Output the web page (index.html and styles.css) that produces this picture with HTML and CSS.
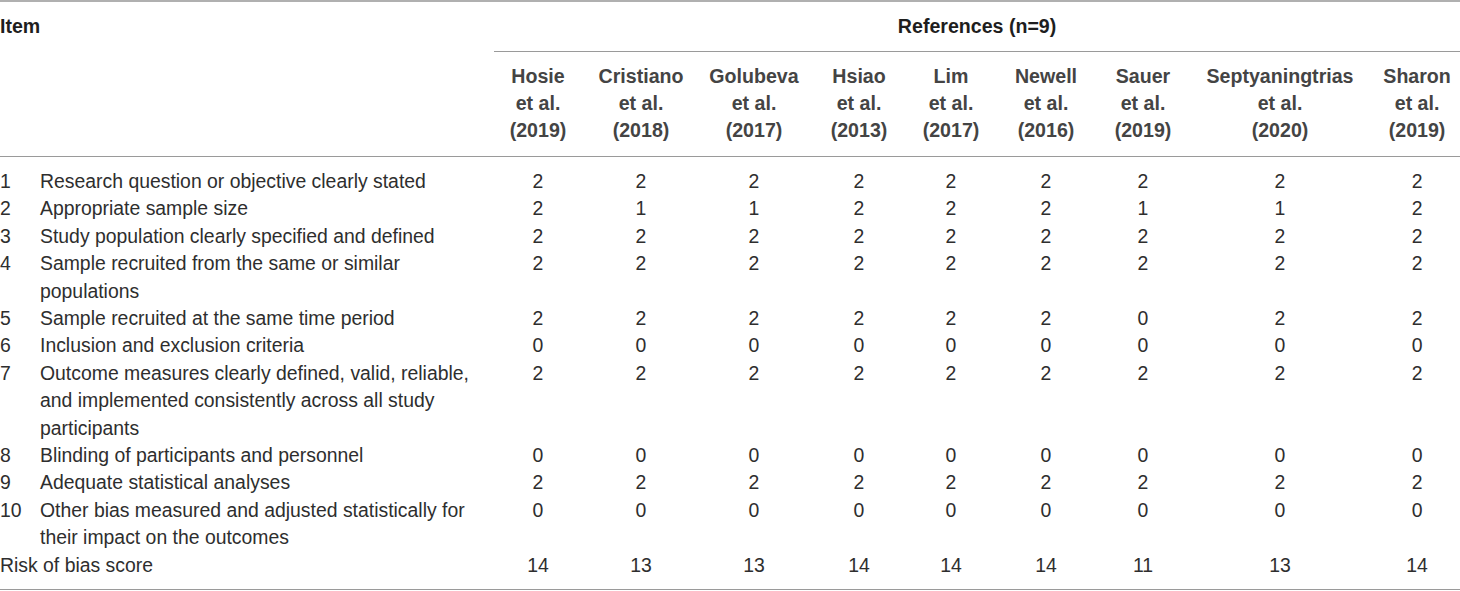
FILE: index.html
```html
<!DOCTYPE html>
<html lang="en">
<head>
    <meta charset="UTF-8">
    <meta name="viewport" content="width=device-width, initial-scale=1.0">
    <title>Risk of bias</title>
    <link rel="stylesheet" href="styles.css">
</head>
<body>
    <table class="bias-table">
        <colgroup>
            <col class="col-num">
            <col class="col-item">
            <col style="width: 88px">
            <col style="width: 118px">
            <col style="width: 108px">
            <col style="width: 102px">
            <col style="width: 82px">
            <col style="width: 108px">
            <col style="width: 86px">
            <col style="width: 188px">
            <col style="width: 86px">
        </colgroup>
        <thead>
            <tr class="head-top">
                <th colspan="2" class="item-head">Item</th>
                <th colspan="9" class="ref-head">References (n=9)</th>
            </tr>
            <tr class="head-authors">
                <th colspan="2"></th>
                <th>Hosie<br>et al.<br>(2019)</th>
                <th>Cristiano<br>et al.<br>(2018)</th>
                <th>Golubeva<br>et al.<br>(2017)</th>
                <th>Hsiao<br>et al.<br>(2013)</th>
                <th>Lim<br>et al.<br>(2017)</th>
                <th>Newell<br>et al.<br>(2016)</th>
                <th>Sauer<br>et al.<br>(2019)</th>
                <th>Septyaningtrias<br>et al.<br>(2020)</th>
                <th>Sharon<br>et al.<br>(2019)</th>
            </tr>
        </thead>
        <tbody>
            <tr>
                <td class="num">1</td>
                <td class="item">Research question or objective clearly stated</td>
                <td>2</td><td>2</td><td>2</td><td>2</td><td>2</td><td>2</td><td>2</td><td>2</td><td>2</td>
            </tr>
            <tr>
                <td class="num">2</td>
                <td class="item">Appropriate sample size</td>
                <td>2</td><td>1</td><td>1</td><td>2</td><td>2</td><td>2</td><td>1</td><td>1</td><td>2</td>
            </tr>
            <tr>
                <td class="num">3</td>
                <td class="item">Study population clearly specified and defined</td>
                <td>2</td><td>2</td><td>2</td><td>2</td><td>2</td><td>2</td><td>2</td><td>2</td><td>2</td>
            </tr>
            <tr>
                <td class="num">4</td>
                <td class="item">Sample recruited from the same or similar populations</td>
                <td>2</td><td>2</td><td>2</td><td>2</td><td>2</td><td>2</td><td>2</td><td>2</td><td>2</td>
            </tr>
            <tr>
                <td class="num">5</td>
                <td class="item">Sample recruited at the same time period</td>
                <td>2</td><td>2</td><td>2</td><td>2</td><td>2</td><td>2</td><td>0</td><td>2</td><td>2</td>
            </tr>
            <tr>
                <td class="num">6</td>
                <td class="item">Inclusion and exclusion criteria</td>
                <td>0</td><td>0</td><td>0</td><td>0</td><td>0</td><td>0</td><td>0</td><td>0</td><td>0</td>
            </tr>
            <tr>
                <td class="num">7</td>
                <td class="item">Outcome measures clearly defined, valid, reliable, and implemented consistently across all study participants</td>
                <td>2</td><td>2</td><td>2</td><td>2</td><td>2</td><td>2</td><td>2</td><td>2</td><td>2</td>
            </tr>
            <tr>
                <td class="num">8</td>
                <td class="item">Blinding of participants and personnel</td>
                <td>0</td><td>0</td><td>0</td><td>0</td><td>0</td><td>0</td><td>0</td><td>0</td><td>0</td>
            </tr>
            <tr>
                <td class="num">9</td>
                <td class="item">Adequate statistical analyses</td>
                <td>2</td><td>2</td><td>2</td><td>2</td><td>2</td><td>2</td><td>2</td><td>2</td><td>2</td>
            </tr>
            <tr>
                <td class="num">10</td>
                <td class="item">Other bias measured and adjusted statistically for their impact on the outcomes</td>
                <td>0</td><td>0</td><td>0</td><td>0</td><td>0</td><td>0</td><td>0</td><td>0</td><td>0</td>
            </tr>
            <tr class="total">
                <td colspan="2" class="item">Risk of bias score</td>
                <td>14</td><td>13</td><td>13</td><td>14</td><td>14</td><td>14</td><td>11</td><td>13</td><td>14</td>
            </tr>
        </tbody>
    </table>
</body>
</html>
```

FILE: styles.css
```css
body {
    margin: 0;
    padding: 0;
    background-color: #ffffff;
    font-family: "Liberation Sans", Arial, sans-serif;
    color: #2e2e2e;
}

.bias-table {
    width: 1460px;
    table-layout: fixed;
    border-collapse: collapse;
    font-size: 19.4px;
    border-top: 2px solid #b0b0b0;
    border-bottom: 1px solid #9a9a9a;
}

.col-num {
    width: 40px;
}

.col-item {
    width: 454px;
}

.bias-table th,
.bias-table td {
    padding: 0;
    text-align: center;
    vertical-align: top;
    line-height: 27.4px;
}

.bias-table th {
    font-weight: bold;
    font-size: 19.6px;
    color: #444444;
}

.head-top th {
    height: 49px;
    vertical-align: middle;
    color: #1e1e1e;
}

.head-top .item-head {
    text-align: left;
}

.head-top .ref-head {
    border-bottom: 1px solid #9a9a9a;
}

.head-authors th {
    line-height: 27px;
    padding: 11px 0 12px;
    border-bottom: 1px solid #9a9a9a;
}

.bias-table td.num,
.bias-table td.item {
    text-align: left;
}

.bias-table td.item {
    padding-right: 14px;
}

.bias-table tbody tr:first-child td {
    padding-top: 11px;
}

.bias-table tbody tr.total td {
    padding-bottom: 10px;
}
```
